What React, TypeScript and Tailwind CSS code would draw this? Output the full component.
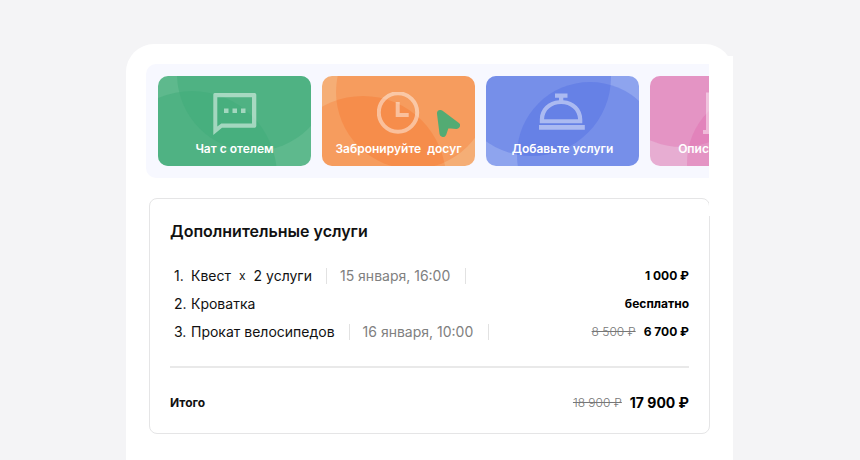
import type { ReactNode } from "react";

type Circle = { cx: number; cy: number; r: number };

type Tile = {
  label: string;
  background: string;
  tint: string;
  opacity: number;
  circles: Circle[];
  icon: ReactNode;
};

function ChatIcon() {
  return (
    <svg className="h-11 w-11" viewBox="0.5 0 44 44" fill="white" fillOpacity="0.5" aria-hidden="true">
      <path
        fillRule="evenodd"
        d="M2.200 1H42a1.800 1.800 0 0 1 1.800 1.800V34a1.800 1.800 0 0 1-1.800 1.800H9.500L0.800 43V2.500a1.500 1.500 0 0 1 1.400-1.500ZM4.800 5.200V34.500L8.800 31.500H39.500V5.200Z"
      />
      <path d="M11.500 16.500h4.500v4.500h-4.500zM20 16.500h4.500v4.500h-4.500zM28.500 16.500h4.500v4.500h-4.500z" />
    </svg>
  );
}

function ClockIcon() {
  return (
    <svg className="h-11 w-11" viewBox="0 0 44 44" aria-hidden="true">
      <circle cx="21" cy="20.5" r="19.2" fill="none" stroke="white" strokeOpacity="0.45" strokeWidth="4" />
      <path d="M18.7 10h4v11h9v4H18.7Z" fill="white" fillOpacity="0.45" />
    </svg>
  );
}

function BellIcon() {
  return (
    <svg className="h-11 w-12" viewBox="1.5 0 48 44" fill="white" fillOpacity="0.45" aria-hidden="true">
      <path
        fillRule="evenodd"
        d="M17.500 1.500H30V5.800H25.800V8.200C36.500 9 44.800 16.500 44.800 27.500V31.300H2.300V27.500C2.300 16.500 11 9 21.500 8.200V5.800H17.500ZM6.600 27.200H40.600C40.300 18 32.800 12 23.600 12C14.300 12 6.800 18 6.600 27.200Z"
      />
      <path d="M1.500 33H47.300V37.700H1.500Z" />
    </svg>
  );
}

function InfoIcon() {
  return (
    <svg className="h-11 w-12" viewBox="0 0 48 44" fill="white" fillOpacity="0.45" aria-hidden="true">
      <path d="M3 0.500H43V38H47V42H-1V38H3ZM7 4.500V38H39V4.500Z" fillRule="evenodd" />
    </svg>
  );
}

const tiles: Tile[] = [
  {
    label: "Чат с отелем",
    background: "bg-[#5eb98d]",
    tint: "#40ab79",
    opacity: 0.5,
    circles: [
      { cx: 34, cy: 100, r: 85 },
      { cx: 96, cy: -2, r: 77 },
    ],
    icon: <ChatIcon />,
  },
  {
    label: "Забронируйте  досуг",
    background: "bg-[#f5ae76]",
    tint: "#fa5400",
    opacity: 0.2,
    circles: [
      { cx: 41, cy: 103, r: 83 },
      { cx: 91, cy: 16, r: 77 },
    ],
    icon: <ClockIcon />,
  },
  {
    label: "Добавьте услуги",
    background: "bg-[#8ea4ee]",
    tint: "#4665e0",
    opacity: 0.33,
    circles: [
      { cx: 46, cy: 1, r: 79 },
      { cx: 104, cy: 79, r: 73 },
    ],
    icon: <BellIcon />,
  },
  {
    label: "Описание отеля",
    background: "bg-[#e7add2]",
    tint: "#dd5da7",
    opacity: 0.3,
    circles: [
      { cx: 32, cy: -8, r: 79 },
      { cx: 110, cy: 87, r: 73 },
    ],
    icon: <InfoIcon />,
  },
];

function ServiceTile({ tile }: { tile: Tile }) {
  return (
    <button
      type="button"
      className={`relative flex h-[90px] w-[153px] shrink-0 flex-col items-center gap-[5px] overflow-hidden rounded-[10px] pt-4 ${tile.background}`}
    >
      <svg className="absolute inset-0 h-full w-full" viewBox="0 0 153 90" aria-hidden="true">
        {tile.circles.map((c) => (
          <circle key={c.cx} cx={c.cx} cy={c.cy} r={c.r} fill={tile.tint} fillOpacity={tile.opacity} />
        ))}
      </svg>
      <span className="relative flex">{tile.icon}</span>
      <span className="relative text-[12px] leading-4 font-semibold whitespace-pre text-white">
        {tile.label}
      </span>
    </button>
  );
}

function Cursor() {
  return (
    <svg
      className="pointer-events-none absolute top-[45px] left-[290px] h-7 w-6"
      viewBox="0 0 24 28"
      aria-hidden="true"
    >
      <path
        d="M4.500 4.500L20.500 16.500L10 15.500L7 24.500Z"
        fill="#53ab73"
        stroke="#53ab73"
        strokeWidth="7"
        strokeLinejoin="round"
      />
    </svg>
  );
}

const services = [
  { name: "Квест", count: "2 услуги", date: "15 января, 16:00", price: "1 000 ₽" },
  { name: "Кроватка", price: "бесплатно" },
  { name: "Прокат велосипедов", date: "16 января, 10:00", oldPrice: "8 500 ₽", price: "6 700 ₽" },
];

export default function App() {
  return (
    <div className="min-h-screen bg-[#f4f4f6] pt-11 pr-[127px] pl-[126px] font-['Inter','Noto_Sans',sans-serif] text-[#111]">
      <main className="relative min-h-[calc(100vh-44px)] rounded-t-[28px] bg-white pt-5">
        <nav aria-label="Услуги отеля" className="relative mr-6 ml-5">
          <div className="flex gap-[11px] overflow-hidden rounded-l-[10px] bg-[#f7f8ff] py-3 pl-3">
            {tiles.map((tile) => (
              <ServiceTile key={tile.label} tile={tile} />
            ))}
          </div>
          <Cursor />
        </nav>

        <section className="mx-[23px] mt-5 rounded-lg border border-[#e5e5e6] px-5 pt-5 pb-[18px]">
          <h2 className="text-[16px] leading-6 font-semibold">Дополнительные услуги</h2>
          <ol className="mt-[19px]">
            {services.map((s, i) => (
              <li key={s.name} className="flex h-7 items-center text-[14px] leading-5">
                <span className="w-[21px] pl-1">{i + 1}.</span>
                <span>{s.name}</span>
                {s.count && (
                  <>
                    <span className="mx-2 text-[12px]">x</span>
                    <span>{s.count}</span>
                  </>
                )}
                {s.date && (
                  <span className="mx-[14px] border-x border-[#e2e2e2] pr-[15px] pl-[13px] leading-4 text-[#808080]">
                    {s.date}
                  </span>
                )}
                <span className="ml-auto flex items-center gap-2 text-[12px]">
                  {s.oldPrice && <s className="font-light text-[#777]">{s.oldPrice}</s>}
                  <strong className="font-bold text-black">{s.price}</strong>
                </span>
              </li>
            ))}
          </ol>
          <hr className="mt-5 border-t-2 border-[#e9e9e9]" />
          <div className="mt-[23px] flex items-center justify-between leading-6">
            <span className="text-[12px] font-bold">Итого</span>
            <span className="flex items-center gap-2">
              <s className="text-[12px] font-light text-[#777]">18 900 ₽</s>
              <strong className="text-[14px] font-bold text-black">17 900 ₽</strong>
            </span>
          </div>
        </section>

        <div className="absolute top-3 right-0 h-40 w-6 bg-white" />
      </main>
    </div>
  );
}
